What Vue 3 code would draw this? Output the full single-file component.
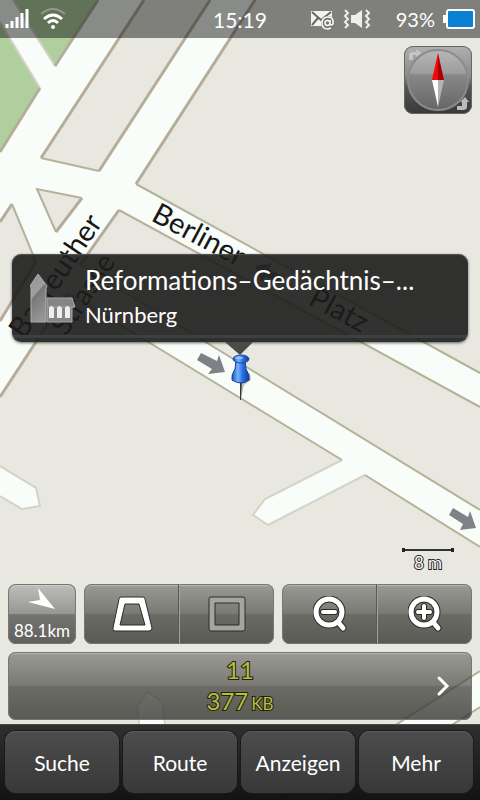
<template>
    <main class="screen">
        <svg class="map" viewBox="0 0 480 800" preserveAspectRatio="xMidYMid slice" aria-hidden="true">
            <rect width="480" height="800" class="land" />
            <path class="park" d="M0 0H98L55 66L40 88L0 152Z" />
            <path class="road" d="M0 0H13L55 66L98 0H144L41 158L99 171L210 0H255L136 184L480 373V407L119 210L80 265L480 510V547L365 475L268 525L253 515L265 499L342 460L68 293L0 397V320L36 262L12 204L0 222V152L40 88L0 22Z" />
            <path class="land" d="M37 189L82 198L56 232Z" />
            <path class="road" d="M0 466L36 488L40 506L22 509L0 496Z" />
            <path class="road" d="M139 800V724L137 706L148 692L162 702L165 724V800Z" />
            <path class="road" d="M480 671L278 800H334L480 707Z" />
            <g class="edge soft">
                <path d="M0 22L40 88M13 0L55 66" />
                <path d="M342 460L265 499L253 515L268 525L365 475" />
                <path d="M0 466L36 488L40 506L22 509L0 496" />
                <path d="M139 800V724L137 706L148 692L162 702L165 724V800" />
            </g>
            <g class="edge wide">
                <path d="M98 0L55 66M40 88L0 152M144 0L41 158M99 171L210 0M255 0L136 184" />
                <path d="M119 210L80 265M68 293L0 397M82 198L56 232M0 222L12 204M36 262L0 321" />
            </g>
            <g class="edge">
                <path d="M41 158L99 171M56 232L37 189L82 198M12 204L36 262" />
                <path d="M136 184L480 373M119 210L480 407M80 265L480 510M68 293L342 460M365 475L480 547" />
                <path d="M480 671L278 800M480 707L334 800" />
            </g>
            <g class="oneway">
                <path d="M201 353L217 361L219 355L225 372L208 374L212 369L197 360Z" />
                <path d="M453 508L468 517L470 511L476 528L460 530L463 524L449 515Z" />
                <path d="M255 266L272 263L269 269L284 277L280 284L265 276L262 282Z" />
            </g>
            <g class="street">
                <text transform="translate(150 220) rotate(28)">Berliner</text>
                <text transform="translate(307 304) rotate(28)">Platz</text>
                <text transform="translate(24 340) rotate(-56)">Bayreuther</text>
                <text transform="translate(66 337) rotate(-56)">Strasse</text>
            </g>
            <g class="credit">
                <text x="159" y="793">Powered by</text>
                <text x="248" y="793">ROUTE 66</text>
            </g>
        </svg>

        <header class="status">
            <div class="status-left">
                <svg width="24" height="22" viewBox="0 0 24 22">
                    <path class="bars" d="M2 16V20M7 13V20M12 9V20M17 5V20M22 1V20" />
                </svg>
                <svg width="26" height="24" viewBox="0 0 26 24" class="wifi">
                    <path class="dim" d="M1 7Q13 -3 25 7" />
                    <path d="M4 12Q13 4 22 12M8 16Q13 11 18 16" />
                    <circle cx="13" cy="20" r="2" />
                </svg>
            </div>
            <time class="clock">15:19</time>
            <div class="status-right">
                <svg width="25" height="22" viewBox="0 0 25 22">
                    <rect x="1" y="3" width="21" height="15" fill="#f2f2f2" />
                    <path d="M2 4L11 12L21 4M2 17L8 10M20 17L14 10" fill="none" stroke="#686864" stroke-width="2" />
                    <circle cx="18" cy="15" r="7" fill="#777772" />
                    <path d="M20 12V16Q21 18 23 16Q24 9 18 9Q12 9 12 15Q12 21 18 21L21 20M20 15A2.5 2.5 0 1 1 15 15A2.5 2.5 0 1 1 20 15" fill="none" stroke="#fff" stroke-width="1.5" />
                </svg>
                <svg class="sound" width="28" height="22" viewBox="0 0 28 22">
                    <path d="M8 7H12L19 2V20L12 15H8Z" fill="#eee" />
                    <path d="M2 2L5 5L2 8L5 11L2 14L5 17L2 20M23 2L26 5L23 8L26 11L23 14L26 17L23 20" fill="none" stroke="#eee" stroke-width="2" />
                </svg>
                <span>93%</span>
                <svg width="32" height="20" viewBox="0 0 32 20">
                    <path d="M0 6H4V14H0Z" fill="#fff" />
                    <rect x="4" y="1" width="27" height="18" rx="2" fill="#0a80d2" stroke="#fff" stroke-width="2" />
                </svg>
            </div>
        </header>

        <button class="compass" aria-label="Kompass">
            <svg viewBox="0 0 68 68">
                <defs>
                    <linearGradient id="dial" x2="0" y2="1">
                        <stop offset="0" stop-color="#b8b8b8" />
                        <stop offset=".4" stop-color="#9b9b9b" />
                        <stop offset=".41" stop-color="#888" />
                        <stop offset="1" stop-color="#666" />
                    </linearGradient>
                </defs>
                <path d="M5 14V9Q5 6 9 6H12V3L18 7L12 11V9H9V14Z" fill="#c4c4c4" />
                <circle cx="34" cy="34" r="30" fill="url(#dial)" stroke="#8b8b8b" stroke-width="2" />
                <path d="M63 56V61Q63 64 59 64H53V60H58V56H56L61 51L65 56Z" fill="#bbb" />
                <path d="M34 7V34H28Z" fill="#f20808" />
                <path d="M34 7L40 34H34Z" fill="#a90000" />
                <path d="M28 34H34V61Z" fill="#fff" />
                <path d="M34 34H40L34 61Z" fill="#b3b3b3" />
            </svg>
        </button>

        <section class="place">
            <button class="callout">
                <svg class="church" width="46" height="50" viewBox="0 0 46 50">
                    <defs>
                        <linearGradient id="stone" x2=".4" y2="1">
                            <stop offset="0" stop-color="#8f8f8f" />
                            <stop offset=".45" stop-color="#a0a0a0" />
                            <stop offset=".5" stop-color="#777" />
                            <stop offset="1" stop-color="#949494" />
                        </linearGradient>
                    </defs>
                    <path d="M1 49V14L0 13L8 1L17 13L16 15V49Z" fill="url(#stone)" stroke="#b0b0b0" />
                    <path d="M17 25H42L45 34H42V49H17Z" fill="#858585" stroke="#a8a8a8" />
                    <path d="M17 34H44" stroke="#a6a6a6" />
                    <path d="M19 45V35Q21 31 24 35V45ZM27 45V35Q29 31 32 35V45ZM35 45V35Q37 31 40 35V45Z" fill="#eee" />
                </svg>
                <span class="names">
                    <span class="title">Reformations–Gedächtnis–...</span>
                    <span class="city">Nürnberg</span>
                </span>
            </button>
            <svg class="pin" width="30" height="60" viewBox="0 0 30 60">
                <defs>
                    <linearGradient id="blue">
                        <stop offset="0" stop-color="#1b52bd" />
                        <stop offset=".35" stop-color="#75b3ff" />
                        <stop offset=".6" stop-color="#2c74e6" />
                        <stop offset="1" stop-color="#123b91" />
                    </linearGradient>
                </defs>
                <path d="M0 0H28L15 13Z" fill="#4a4a48" />
                <path d="M16 56L17 40L25 31L26 38L19 43Z" fill="#000" opacity=".25" />
                <path d="M15 38H17L16 58H15Z" fill="#333" />
                <path d="M11 19H20L21 27Q25 33 24 38Q16 44 7 38Q6 33 10 27Z" fill="url(#blue)" stroke="#143f98" />
                <ellipse cx="16" cy="17" rx="8" ry="4" fill="url(#blue)" stroke="#1849a7" />
                <ellipse cx="14" cy="16" rx="4" ry="1" fill="#9bc9ff" />
            </svg>
        </section>

        <div class="scale">
            <svg width="52" height="6" viewBox="0 0 52 6">
                <path d="M1 3H51" stroke="#333" stroke-width="2" />
                <path d="M0 1H3V5H0ZM49 1H52V5H49Z" fill="#222" />
            </svg>
            <span>8 m</span>
        </div>

        <div class="controls">
            <button class="panel distance">
                <svg width="28" height="22" viewBox="0 0 28 22">
                    <path d="M10 0L27 21L0 14L12 12Z" fill="#fff" />
                </svg>
                <span>88.1km</span>
            </button>
            <div class="panel pair">
                <button aria-label="3D-Ansicht">
                    <svg width="42" height="38" viewBox="0 0 42 38">
                        <path d="M10 2H32Q34 2 34 4L41 33Q41 36 38 36H4Q1 36 2 33L8 4Q8 2 10 2ZM14 9L9 30H34L28 9Z" fill="#fff" fill-rule="evenodd" stroke="#2b2b29" />
                    </svg>
                </button>
                <button aria-label="2D-Ansicht">
                    <svg width="38" height="38" viewBox="0 0 38 38">
                        <path d="M3 2H35Q37 2 37 4V34Q37 36 35 36H3Q1 36 1 34V4Q1 2 3 2ZM7 8V30H31V8Z" fill="#a5a5a0" fill-rule="evenodd" stroke="#2b2b29" />
                    </svg>
                </button>
            </div>
            <div class="panel pair">
                <button v-for="zoom in zooms" :key="zoom.label" :aria-label="zoom.label">
                    <svg class="lens" width="34" height="36" viewBox="0 0 34 36">
                        <g class="outline">
                            <circle cx="16" cy="16" r="13" />
                            <path d="M25 26L30 32" />
                        </g>
                        <g class="glass">
                            <circle cx="16" cy="16" r="13" />
                            <path d="M25 26L30 32" />
                        </g>
                        <path class="sign-outline" :d="zoom.sign" />
                        <path class="sign" :d="zoom.sign" />
                    </svg>
                </button>
            </div>
        </div>

        <button class="panel traffic">
            <span class="count">11</span>
            <span class="count">377<small>KB</small></span>
            <svg class="chevron" width="14" height="22" viewBox="0 0 14 22">
                <path d="M3 3L11 11L3 19" />
            </svg>
        </button>

        <nav class="menu">
            <button v-for="item in menu" :key="item">{{ item }}</button>
        </nav>
    </main>
</template>

<script setup>
const menu = ['Suche', 'Route', 'Anzeigen', 'Mehr']

const zooms = [
    { label: 'Verkleinern', sign: 'M10 16H22' },
    { label: 'Vergrößern', sign: 'M10 16H22M16 10V22' }
]
</script>

<style>
body {
    margin: 0;
    background: #e8e7e0;
}
</style>

<style scoped>
.screen {
    position: relative;
    display: flex;
    flex-direction: column;
    min-height: 100vh;
    overflow: hidden;
    font-family: Lato, "Open Sans", sans-serif;
    color: #fff;
}

button {
    margin: 0;
    padding: 0;
    border: 0;
    background: none;
    color: inherit;
    font: inherit;
    cursor: pointer;
}

svg {
    display: block;
}

/* Map */
.map {
    position: absolute;
    inset: 0;
    z-index: -1;
    width: 100%;
    height: 100%;
}

.land {
    fill: #e8e7e0;
}

.park {
    fill: #b0cf9f;
}

.road {
    fill: #f9fdf9;
}

.edge {
    fill: none;
    stroke: #b6b299;
    stroke-width: 2;
}

.edge.wide {
    stroke: #b5ad99;
    stroke-width: 3;
}

.edge.soft {
    stroke: #d5d3c8;
}

.oneway {
    fill: #7f8186;
}

.street {
    font-size: 29px;
    fill: #161616;
    stroke: #f9fdf9;
    stroke-width: 2;
    paint-order: stroke;
}

.credit {
    font-size: 14px;
    fill: #000;
}

/* Status bar */
.status {
    display: grid;
    grid-template-columns: 1fr auto 1fr;
    align-items: center;
    height: 38px;
    padding: 0 5px;
    background: rgba(0, 0, 0, 0.45);
    font-size: 20px;
}

.status-left,
.status-right {
    display: flex;
    align-items: center;
}

.status-left {
    gap: 11px;
}

.status-right {
    justify-content: flex-end;
    gap: 8px;
}

.sound {
    margin-right: 17px;
}

.clock {
    font-size: 21px;
}

.bars {
    stroke: #fff;
    stroke-width: 3;
}

.wifi {
    fill: none;
    stroke: #fff;
    stroke-width: 3;
}

.wifi circle {
    fill: #fff;
    stroke: none;
}

.wifi .dim {
    stroke: #92978e;
    stroke-width: 2;
}

.compass {
    box-sizing: border-box;
    width: 68px;
    height: 68px;
    margin: 8px 8px 0 auto;
    border-radius: 9px;
    background: linear-gradient(#b0b0b0, #8a8a8a 45%, #555 60%, #383838);
    box-shadow: inset 0 0 0 1px #666;
}

/* Selected place */
.place {
    display: flex;
    flex-direction: column;
    align-items: center;
    margin: 140px 12px auto;
}

.callout {
    box-sizing: border-box;
    display: flex;
    align-items: flex-start;
    gap: 9px;
    width: 100%;
    height: 88px;
    padding: 8px 18px;
    border-radius: 9px;
    background: linear-gradient(transparent 81px, #3b4045 81px, #3b4045 84px, transparent 84px), rgba(28, 28, 27, 0.9);
    box-shadow: inset 0 1px 1px #555, 0 1px 3px rgba(0, 0, 0, 0.6);
    text-align: left;
}

.church {
    margin-top: 11px;
    flex: none;
}

.names {
    display: flex;
    flex-direction: column;
    min-width: 0;
}

.title {
    font-size: 26px;
    line-height: 36px;
    white-space: nowrap;
}

.city {
    font-size: 22px;
    line-height: 34px;
}

/* Scale */
.scale {
    display: flex;
    flex-direction: column;
    align-items: center;
    align-self: flex-end;
    margin: 0 26px 11px;
    font-size: 17px;
    line-height: 20px;
}

.scale span {
    -webkit-text-stroke: 2px #222;
    paint-order: stroke;
}

/* Map controls */
.controls {
    display: grid;
    grid-template-columns: 68px 1fr 1fr;
    gap: 8px;
    height: 60px;
    margin: 0 8px 8px;
}

.panel {
    border-radius: 8px;
    background: linear-gradient(rgba(78, 78, 76, 0.5), rgba(62, 62, 58, 0.65) 50%, rgba(60, 60, 56, 0.72) 50%, rgba(54, 54, 50, 0.8));
    box-shadow: inset 0 0 0 1px #73777a, inset 0 2px 1px rgba(255, 255, 255, 0.3);
}

.distance {
    display: flex;
    flex-direction: column;
    align-items: center;
    justify-content: space-between;
    padding: 4px 0 2px;
    background: linear-gradient(#bebebb, #969693 50%, #747471 51%, #5f5f5c);
    font-size: 17px;
    line-height: 22px;
}

.pair {
    display: grid;
    grid-template-columns: 1fr 1fr;
}

.pair button {
    display: grid;
    place-items: center;
}

.pair button + button {
    border-left: 1px solid #a0a09c;
    box-shadow: -1px 0 #595955;
}

.lens {
    fill: none;
    stroke-linecap: round;
}

.outline {
    stroke: #2b2b29;
    stroke-width: 7;
}

.glass {
    stroke: #fff;
    stroke-width: 5;
}

.sign-outline {
    stroke: #2b2b29;
    stroke-width: 6;
}

.sign {
    stroke: #fff;
    stroke-width: 4;
}

.traffic {
    position: relative;
    display: flex;
    flex-direction: column;
    align-items: center;
    justify-content: center;
    height: 68px;
    margin: 0 8px 4px;
    font-size: 24px;
    line-height: 31px;
}

.count {
    color: #b8bd3e;
    -webkit-text-stroke: 2px #22220c;
    paint-order: stroke;
}

.count small {
    margin-left: 3px;
    font-size: 17px;
}

.chevron {
    position: absolute;
    top: 23px;
    right: 22px;
    fill: none;
    stroke: #fff;
    stroke-width: 3;
    stroke-linecap: round;
}

/* Bottom menu */
.menu {
    display: grid;
    grid-template-columns: repeat(4, 1fr);
    gap: 4px;
    padding: 7px 7px 7px 5px;
    background: linear-gradient(rgba(40, 40, 40, 0.96), rgba(12, 12, 12, 0.97));
    box-shadow: inset 0 1px #4a4a47;
}

.menu button {
    height: 62px;
    border-radius: 11px;
    background: linear-gradient(rgba(78, 78, 78, 0.95), rgba(58, 58, 58, 0.95));
    box-shadow: 0 0 0 1px #1a1a1a, inset 0 1px #5c5c5c;
    font-size: 21px;
}
</style>
